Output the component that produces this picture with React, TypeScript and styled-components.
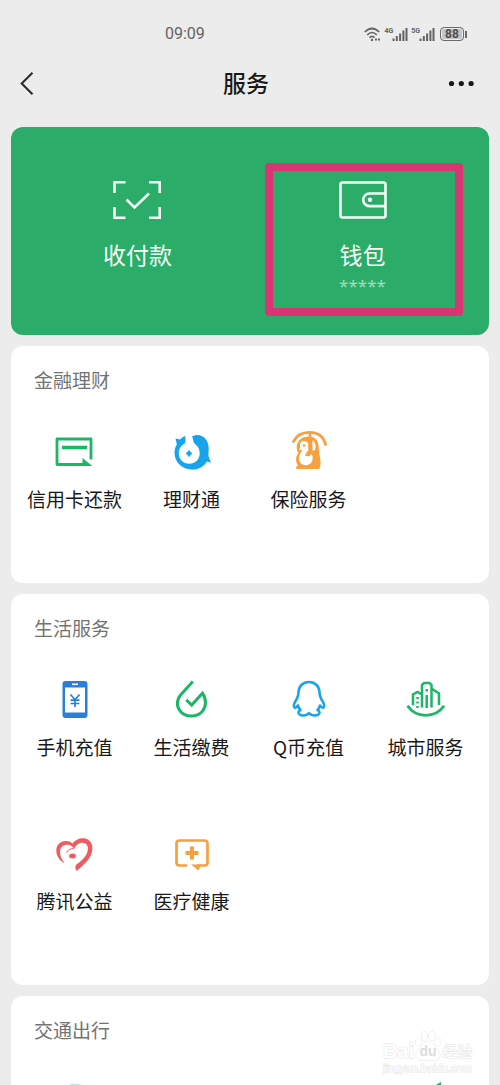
import React from "react";
import styled, { createGlobalStyle } from "styled-components";

const GlobalStyle = createGlobalStyle`
  * { box-sizing: border-box; }
  body {
    margin: 0;
    background: #ececec;
    color: #191919;
    font-family: "Noto Sans CJK SC", "Noto Sans", sans-serif;
  }
  button { font: inherit; color: inherit; background: none; border: 0; padding: 0; cursor: pointer; }
  svg { display: block; flex: none; }
`;

const Page = styled.div`
  position: relative;
  display: flex;
  flex-direction: column;
  height: 100vh;
  overflow: hidden;
`;

const StatusBar = styled.div`
  display: flex;
  align-items: center;
  justify-content: space-between;
  flex: none;
  height: 68px;
  padding: 0 33px 0 33%;
  color: #636363;
`;

const Time = styled.span`
  font: 16px/20px Roboto, sans-serif;
`;

const StatusIcons = styled.div`
  display: flex;
  align-items: center;
  gap: 3px;
`;

const SignalGroup = styled.div`
  display: flex;
  align-items: flex-start;

  svg { margin-left: -1px; }
`;

const NetworkType = styled.span`
  font: bold 7px/8px Roboto, sans-serif;
`;

const Battery = styled.div`
  display: flex;
  align-items: center;
  gap: 1px;
  margin-left: 2px;

  &::after {
    content: "";
    width: 2px;
    height: 7px;
    background: #6b6b6b;
  }
`;

const BatteryLevel = styled.span`
  width: 24px;
  height: 14px;
  border: 1px solid #6b6b6b;
  border-radius: 4px;
  background: #c4c4c4;
  box-shadow: inset 0 0 0 1px #ececec;
  text-align: center;
  font: bold 12px/12px Roboto, sans-serif;
  color: #505050;
`;

const Header = styled.header`
  display: grid;
  grid-template-columns: 40px 1fr 40px;
  align-items: center;
  flex: none;
  height: 32px;
  margin: 0 21px 27px 13px;
`;

const Title = styled.h1`
  align-self: start;
  margin: 0;
  text-align: center;
  font-size: 23px;
  line-height: 28px;
  font-weight: 500;
`;

const IconButton = styled.button<{ $align: string }>`
  display: flex;
  align-items: center;
  justify-content: ${(p) => p.$align};
  height: 32px;
`;

const Main = styled.main`
  display: flex;
  flex-direction: column;
  gap: 11px;
  padding: 0 11px;
`;

const PayCard = styled.section`
  display: grid;
  grid-template-columns: 1fr 1fr;
  flex: none;
  height: 208px;
  padding: 0 14px;
  border-radius: 12px;
  background: #2bac68;
`;

const PayTile = styled.button`
  position: relative;
  display: flex;
  flex-direction: column;
  align-items: center;
  justify-content: flex-start;
  padding-top: 53px;
  color: #f4fff8;
`;

const PayLabel = styled.span`
  margin-top: 19px;
  font-size: 23px;
  line-height: 30px;
`;

const Balance = styled.span`
  margin-top: 5px;
  font: 17px/24px "Noto Sans", sans-serif;
  color: #a5dcbf;
`;

const Highlight = styled.span`
  position: absolute;
  inset: 36px 12px 19px 15px;
  border: 8px solid #d93574;
  border-radius: 4px;
  pointer-events: none;
`;

const Section = styled.section`
  flex: none;
  padding: 20px 5px 0;
  border-radius: 12px;
  background: #fff;
`;

const SectionTitle = styled.h2`
  margin: 0 0 35px 18px;
  font-size: 19px;
  line-height: 28px;
  font-weight: 400;
  color: #737373;
`;

const Grid = styled.div`
  display: grid;
  grid-template-columns: repeat(4, 1fr);
`;

const Service = styled.button`
  display: flex;
  flex-direction: column;
  align-items: center;
  justify-content: flex-start;
  gap: 12px;
  height: 154px;
  font-size: 19px;
  line-height: 28px;
  white-space: nowrap;
`;

const Watermark = styled.div`
  position: absolute;
  right: 27px;
  bottom: 11px;
  width: 90px;
  color: #fff;
  -webkit-text-stroke: 1px #e4e4e4;
  paint-order: stroke fill;
`;

const WatermarkBrand = styled.div`
  display: flex;
  align-items: flex-end;
  font: bold 20px/22px "Liberation Sans", sans-serif;
`;

const WatermarkPaw = styled.span`
  position: relative;
  width: 28px;
  height: 32px;
  text-align: center;
  font-size: 14px;
  line-height: 42px;

  svg { position: absolute; inset: 0; }
  span { position: relative; color: #dcdcdc; -webkit-text-stroke: 0; }
`;

const WatermarkName = styled.span`
  font: 15px/22px "Noto Sans CJK SC", sans-serif;
`;

const WatermarkUrl = styled.div`
  font: 11px/12px "Liberation Sans", sans-serif;
`;

const Icon = ({ children }: { children: React.ReactNode }) => (
  <svg width="44" height="44" viewBox="0 0 44 44" fill="none" aria-hidden="true">
    {children}
  </svg>
);

const GREEN = "#1fb567";
const BLUE = "#1aa5e8";
const ORANGE = "#f6a040";
const RED = "#ee5c62";

const CreditCardIcon = () => (
  <Icon>
    <path d="M38 30.500V10H4V35.500H32" stroke={GREEN} strokeWidth="2.800" strokeLinejoin="round" />
    <path d="M9 18.500H34" stroke={GREEN} strokeWidth="3.600" />
    <path d="M29.500 29L39.300 36.900H29.500Z" fill={GREEN} />
  </Icon>
);

const WealthIcon = () => (
  <Icon>
    <path
      d="M22 7.500C29 3 38.700 8.500 38.700 19C38.700 22 38.500 25 38.400 27L41 33.800L37 32.500C33.500 38 28 41 21.500 40.500C11.500 40 5 33 4.500 24.500C4.300 20.500 5.500 17.500 6.800 15.500L5.500 9.500L10 10.500C12 8.500 14 7.300 15.300 7C15.300 10 16 12 14.800 14.500C11 16.300 8.800 20 8.800 24.500C8.800 30.300 13.300 34.800 19 34.800C25.500 34.800 29.700 30 29.700 24.500C29.700 20 28 17.500 25.500 15.500C22.500 13 23.500 10 22 7.500Z"
      fill="#18a4ed"
    />
    <path d="M19 21.500Q20 23.500 22 24.500Q20 25.500 19 27.500Q18 25.500 16 24.500Q18 23.500 19 21.500Z" fill="#18a4ed" stroke="#18a4ed" />
  </Icon>
);

const InsuranceIcon = () => (
  <Icon>
    <path d="M6 13.500C9 6.500 15 3.300 22.500 3.300C31 3.300 37 8 38.800 16.500" stroke={ORANGE} strokeWidth="2.800" />
    <path
      fillRule="evenodd"
      d="M22 7.500C29 7.500 31.800 13 31.800 19C31.800 26.500 35.500 33 32.300 40H10C8.300 39.500 8.800 37.800 10.800 36.500C8 31.500 9 27 11.300 24C8.800 20 9.300 14.500 12.500 11C14.800 8.500 18 7.500 22 7.500ZM16.500 12C13.500 12 12.500 15 13.300 18.200L12 20.500L15.500 21.500C12 25 11.300 29.500 13 33C15.500 37.500 22.500 37.500 25 32.500C26 30 25.800 27.500 25 25.500L19.500 25V22.500H21.300V14.500C20.300 13 18.700 12 16.500 12Z"
      fill={ORANGE}
    />
    <path d="M26 11.500C28.800 14 29.300 18 27.800 21.500H25.500V12Z" fill="#fff" />
    <path d="M23 4V24.500Q22 27 18.500 25.500" stroke={ORANGE} strokeWidth="2.400" />
    <circle cx="17" cy="16.500" r="1.300" fill={ORANGE} />
  </Icon>
);

const PhoneIcon = () => (
  <Icon>
    <rect x="9.500" y="4" width="25" height="37" rx="3" fill="#2a7fd9" />
    <rect x="12" y="10.500" width="20" height="25" fill="#fff" />
    <path d="M19 7.300H25" stroke="#fff" strokeWidth="1.600" />
    <path d="M17.500 17.500L22 22.800L26.500 17.500M22 22.500V30M17.500 23.200H26.500M17.500 26.500H26.500" stroke="#2a7fd9" strokeWidth="1.700" />
  </Icon>
);

const BillsIcon = () => (
  <Icon>
    <path d="M22.800 4.500L11 17.500C6.300 22.800 6.300 29.800 10.500 34.500C16 40.500 26.500 40.500 32 34.800C36.300 30 36.800 22.500 32.500 16.200L21.700 28L16.300 22.800" stroke={GREEN} strokeWidth="3" />
  </Icon>
);

const QCoinIcon = () => (
  <Icon>
    <path
      d="M22 5C15.500 5 11.700 9.500 11.500 15.500C11.400 18 11 19.500 10 21.500C7.500 25.500 6 29.500 7.500 30.500C8.800 31.200 10 29.500 11 28.500C11.500 30.500 12.300 31.800 13.500 33C11 34 10.700 36.800 13 37.800C16 39 20 38 22 36.200C24 38 28 39 31 37.800C33.300 36.800 33 34 30.500 33C31.700 31.800 32.500 30.500 33 28.500C34 29.500 35.200 31.200 36.500 30.500C38 29.500 36.500 25.500 34 21.500C33 19.500 32.600 18 32.500 15.500C32.300 9.500 28.500 5 22 5Z"
      stroke={BLUE}
      strokeWidth="2.600"
      strokeLinejoin="round"
    />
  </Icon>
);

const CityIcon = () => (
  <Icon>
    <path d="M3.500 28.800C12 41.500 31.500 41.500 40 28.800" stroke={GREEN} strokeWidth="2.800" />
    <path
      d="M9 28V17.500L13.500 15L18 17.500M18 30.500V8L20 6H25.500L27.500 8V30.500M27.500 11.500L35 16.500V28M13.500 20V22M13.500 24.500V26.500M13.500 29V31M22.700 31V18M22.700 12V14.500"
      stroke={GREEN}
      strokeWidth="2.500"
    />
  </Icon>
);

const CharityIcon = () => (
  <Icon>
    <path
      d="M11.500 32.500C6 29 3.300 24.500 3.300 19.500C3.300 13.500 8 9.500 13.500 10C16 10.200 18 11.200 19.500 12.500C22.500 8.500 28 6.300 33 7.800C38.500 9.500 40.500 15.500 39 21C37 28.500 31 34 23.500 40C22 37 22 35.500 23.300 33.500C29 29.500 34 25 34.800 19C35.500 14.500 33 11.500 29 11.700C25 12 22.500 14.500 21.300 17.800C19 14.800 16.500 13.300 13.300 13.800C9.500 14.300 7 17 7 21C7 24.500 8.500 28 11.500 32.500Z"
      fill={RED}
    />
    <ellipse cx="19.500" cy="25" rx="3.400" ry="2.500" fill={RED} />
    <path d="M13.500 21.500C15 18.500 17.500 17.300 21 17.800" stroke={RED} />
  </Icon>
);

const MedicalIcon = () => (
  <Icon>
    <path d="M17 34.500H9.500Q6.500 34.500 6.500 31.500V12.500Q6.500 9.500 9.500 9.500H34.500Q37.500 9.500 37.500 12.500V31.500Q37.500 34.500 34.500 34.500H27" stroke={ORANGE} strokeWidth="2.700" />
    <path d="M21 33.500H31L28.500 39.500Z" fill={ORANGE} />
    <path d="M22 15.500V28.500M15.500 22H28.500" stroke={ORANGE} strokeWidth="4" />
  </Icon>
);

const TravelIcon = () => (
  <Icon>
    <circle cx="22" cy="23" r="17" stroke="#b5e6ee" strokeWidth="2.500" />
  </Icon>
);

const HotelIcon = () => (
  <Icon>
    <path d="M30 7L37 3V38H8V20Z" fill={GREEN} />
  </Icon>
);

const Signal = () => (
  <svg width="16" height="15" viewBox="0 0 16 15" aria-hidden="true">
    <path d="M1.500 11.500V14M4.800 9V14M8.100 6.500V14M11.400 3.500V14M14.500 1V14" stroke="#636363" strokeWidth="2" />
  </svg>
);

const finance = [
  { name: "信用卡还款", Icon: CreditCardIcon },
  { name: "理财通", Icon: WealthIcon },
  { name: "保险服务", Icon: InsuranceIcon },
];

const living = [
  { name: "手机充值", Icon: PhoneIcon },
  { name: "生活缴费", Icon: BillsIcon },
  { name: "Q币充值", Icon: QCoinIcon },
  { name: "城市服务", Icon: CityIcon },
  { name: "腾讯公益", Icon: CharityIcon },
  { name: "医疗健康", Icon: MedicalIcon },
];

type Item = { name: string; Icon: () => React.ReactElement };

const ServiceSection = ({ title, items }: { title: string; items: Item[] }) => (
  <Section>
    <SectionTitle>{title}</SectionTitle>
    <Grid>
      {items.map(({ name, Icon: Glyph }) => (
        <Service key={name} type="button">
          <Glyph />
          <span>{name}</span>
        </Service>
      ))}
    </Grid>
  </Section>
);

export default function App() {
  return (
    <>
      <GlobalStyle />
      <Page>
        <StatusBar>
          <Time>09:09</Time>
          <StatusIcons>
            <svg width="17" height="15" viewBox="0 0 17 15" fill="none" stroke="#636363" strokeWidth="1.700" aria-hidden="true">
              <path d="M.8 5Q8 -2 15.200 5M3.200 8Q8 3 12.800 8M5.500 10.700Q8 8 10.500 10.700" />
              <circle cx="8" cy="13" r="1.200" fill="#636363" stroke="none" />
              <path d="M11 12.500H16" strokeWidth="2" strokeDasharray="2 1" />
            </svg>
            <SignalGroup>
              <NetworkType>4G</NetworkType>
              <Signal />
            </SignalGroup>
            <SignalGroup>
              <NetworkType>5G</NetworkType>
              <Signal />
            </SignalGroup>
            <Battery>
              <BatteryLevel>88</BatteryLevel>
            </Battery>
          </StatusIcons>
        </StatusBar>

        <Header>
          <IconButton type="button" aria-label="返回" $align="flex-start">
            <svg width="24" height="24" viewBox="0 0 24 24" fill="none" aria-hidden="true">
              <path d="M19.500 .8L8.700 11.500L19.500 22.300" stroke="#2a2a2a" strokeWidth="2" />
            </svg>
          </IconButton>
          <Title>服务</Title>
          <IconButton type="button" aria-label="更多" $align="flex-end">
            <svg width="32" height="8" viewBox="0 0 32 8" fill="#191919" aria-hidden="true">
              <circle cx="4.500" cy="3.500" r="2.600" />
              <circle cx="14.300" cy="3.500" r="2.600" />
              <circle cx="24.100" cy="3.500" r="2.600" />
            </svg>
          </IconButton>
        </Header>

        <Main>
          <PayCard>
            <PayTile type="button">
              <svg width="50" height="40" viewBox="0 0 50 40" fill="none" stroke="currentColor" strokeWidth="2.600" aria-hidden="true">
                <path d="M1.500 13V2.300H12.500M36 2.300H46.700V13M46.700 27V37.700H36M12.500 37.700H1.500V27" />
                <path d="M13.500 19.500L21.500 27.500L36 13.500" />
              </svg>
              <PayLabel>收付款</PayLabel>
            </PayTile>
            <PayTile type="button">
              <svg width="50" height="40" viewBox="0 0 50 40" fill="none" stroke="currentColor" strokeWidth="2.600" aria-hidden="true">
                <rect x="2.500" y="2.500" width="45" height="35" rx="2" />
                <path d="M47 13.500H31.500A6.300 6.300 0 0 0 31.500 26.100H47" />
                <circle cx="32" cy="19.800" r="2.200" fill="currentColor" stroke="none" />
              </svg>
              <PayLabel>钱包</PayLabel>
              <Balance>*****</Balance>
              <Highlight />
            </PayTile>
          </PayCard>

          <ServiceSection title="金融理财" items={finance} />
          <ServiceSection title="生活服务" items={living} />

          <Section>
            <SectionTitle>交通出行</SectionTitle>
            <Grid>
              <Service type="button" aria-label="出行服务">
                <TravelIcon />
              </Service>
              <span />
              <span />
              <Service type="button" aria-label="酒店">
                <HotelIcon />
              </Service>
            </Grid>
          </Section>
        </Main>

        <Watermark>
          <WatermarkBrand>
            <span>Bai</span>
            <WatermarkPaw>
              <svg width="28" height="32" viewBox="0 0 28 32" fill="#fff" stroke="#e2e2e2" aria-hidden="true">
                <ellipse cx="4.500" cy="12" rx="3" ry="4" />
                <ellipse cx="10.500" cy="6" rx="3" ry="4.500" />
                <ellipse cx="18" cy="6" rx="3" ry="4.500" />
                <ellipse cx="24" cy="12" rx="3" ry="4" />
                <path d="M14 12C9 12 8 17 4.500 20C1 23 1 30 7 30H21C27 30 27 23 23.500 20C20 17 19 12 14 12Z" />
              </svg>
              <span>du</span>
            </WatermarkPaw>
            <WatermarkName>经验</WatermarkName>
          </WatermarkBrand>
          <WatermarkUrl>jingyan.baidu.com</WatermarkUrl>
        </Watermark>
      </Page>
    </>
  );
}
